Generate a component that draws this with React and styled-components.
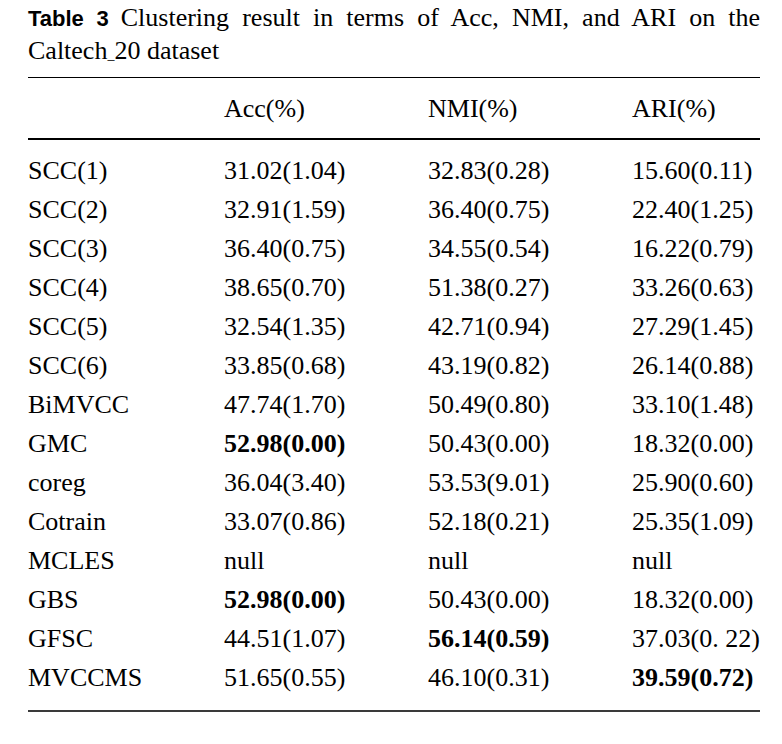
import React from 'react'
import styled, { createGlobalStyle } from 'styled-components'

const GlobalStyle = createGlobalStyle`
  body {
    margin: 0;
    background: #fff;
    color: #000;
    font-family: "Liberation Serif", "Times New Roman", serif;
  }
`;

const Page = styled.div`
  width: 732px;
  padding: 2px 0 0 28px;
`;

const Caption = styled.p`
  margin: 0;
  font-size: 26px;
  line-height: 32px;
  text-align: justify;
`;

const Label = styled.span`
  font-family: "Liberation Sans", Arial, sans-serif;
  font-weight: 700;
  font-size: 22px;
  margin-right: 12px;
`;

const Under = styled.span`
  font-size: 14px;
`;

const Table = styled.div`
  margin-top: 6px;
  border-top: 1px solid #000;
  border-bottom: 2px solid #3a3a3a;
  font-size: 26px;
  line-height: 39px;
`;

const Row = styled.div`
  display: grid;
  grid-template-columns: 196px 204px 204px 1fr;
`;

const Head = styled(Row)`
  padding: 11px 0 10px;
  border-bottom: 2px solid #000;
`;

const Body = styled.div`
  padding: 11px 0 13px;
`;

const Cell = styled.div`
  font-weight: ${p => (p.$bold ? 700 : 400)};
  white-space: nowrap;
`;

const rows = [
  ['SCC(1)', '31.02(1.04)', '32.83(0.28)', '15.60(0.11)'],
  ['SCC(2)', '32.91(1.59)', '36.40(0.75)', '22.40(1.25)'],
  ['SCC(3)', '36.40(0.75)', '34.55(0.54)', '16.22(0.79)'],
  ['SCC(4)', '38.65(0.70)', '51.38(0.27)', '33.26(0.63)'],
  ['SCC(5)', '32.54(1.35)', '42.71(0.94)', '27.29(1.45)'],
  ['SCC(6)', '33.85(0.68)', '43.19(0.82)', '26.14(0.88)'],
  ['BiMVCC', '47.74(1.70)', '50.49(0.80)', '33.10(1.48)'],
  ['GMC', '52.98(0.00)', '50.43(0.00)', '18.32(0.00)', 1],
  ['coreg', '36.04(3.40)', '53.53(9.01)', '25.90(0.60)'],
  ['Cotrain', '33.07(0.86)', '52.18(0.21)', '25.35(1.09)'],
  ['MCLES', 'null', 'null', 'null'],
  ['GBS', '52.98(0.00)', '50.43(0.00)', '18.32(0.00)', 1],
  ['GFSC', '44.51(1.07)', '56.14(0.59)', '37.03(0. 22)', 2],
  ['MVCCMS', '51.65(0.55)', '46.10(0.31)', '39.59(0.72)', 3],
];

export default function App() {
  return (
    <Page>
      <GlobalStyle />
      <Caption>
        <Label>Table 3</Label>
        Clustering result in terms of Acc, NMI, and ARI on the Caltech<Under>_</Under>20 dataset
      </Caption>
      <Table>
        <Head>
          <Cell />
          <Cell>Acc(%)</Cell>
          <Cell>NMI(%)</Cell>
          <Cell>ARI(%)</Cell>
        </Head>
        <Body>
          {rows.map(([name, acc, nmi, ari, best]) => (
            <Row key={name}>
              <Cell>{name}</Cell>
              <Cell $bold={best === 1}>{acc}</Cell>
              <Cell $bold={best === 2}>{nmi}</Cell>
              <Cell $bold={best === 3}>{ari}</Cell>
            </Row>
          ))}
        </Body>
      </Table>
    </Page>
  );
}
